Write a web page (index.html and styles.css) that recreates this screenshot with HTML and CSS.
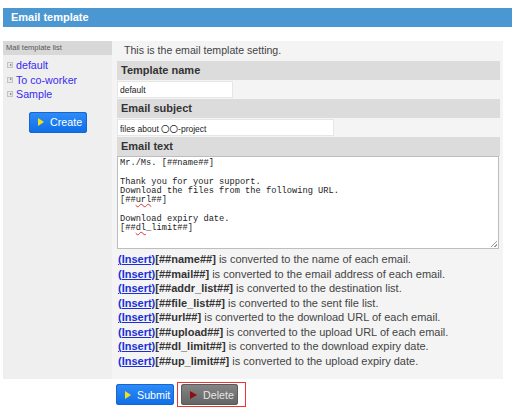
FILE: index.html
```html
<!DOCTYPE html>
<html>
<head>
<meta charset="utf-8">
<link rel="stylesheet" href="styles.css">
</head>
<body>
<div class="header">Email template</div>
<div class="layout">
  <div class="sidebar">
    <div class="side-head">Mail template list</div>
    <ul class="tpl-list">
      <li><span class="sq"></span><a href="#">default</a></li>
      <li><span class="sq"></span><a href="#">To co-worker</a></li>
      <li><span class="sq"></span><a href="#">Sample</a></li>
    </ul>
    <div class="create-wrap"><button class="btn btn-blue create"><span class="tri tri-yellow"></span>Create</button></div>
  </div>
  <div class="main">
    <p class="intro">This is the email template setting.</p>
    <div class="bar">Template name</div>
    <div class="field"><input class="inp inp-name" value="default"></div>
    <div class="bar">Email subject</div>
    <div class="field"><input class="inp inp-subj" value="files about 〇〇-project"></div>
    <div class="bar">Email text</div>
    <div class="textarea">Mr./Ms. [##name##]

Thank you for your support.
Download the files from the following URL.
[##<span class="sp">url</span>##]

Download expiry date.
[##<span class="sp">dl</span>_limit##]<span class="grip"></span></div>
    <ul class="help">
      <li><a href="#">(Insert)</a><b>[##name##]</b> is converted to the name of each email.</li>
      <li><a href="#">(Insert)</a><b>[##mail##]</b> is converted to the email address of each email.</li>
      <li><a href="#">(Insert)</a><b>[##addr_list##]</b> is converted to the destination list.</li>
      <li><a href="#">(Insert)</a><b>[##file_list##]</b> is converted to the sent file list.</li>
      <li><a href="#">(Insert)</a><b>[##url##]</b> is converted to the download URL of each email.</li>
      <li><a href="#">(Insert)</a><b>[##upload##]</b> is converted to the upload URL of each email.</li>
      <li><a href="#">(Insert)</a><b>[##dl_limit##]</b> is converted to the download expiry date.</li>
      <li><a href="#">(Insert)</a><b>[##up_limit##]</b> is converted to the upload expiry date.</li>
    </ul>
  </div>
</div>
<div class="actions">
  <button class="btn btn-blue submit"><span class="tri tri-yellow"></span>Submit</button>
  <div class="focus-ring"><button class="btn btn-gray delete"><span class="tri tri-red"></span>Delete</button></div>
</div>
</body>
</html>
```
FILE: styles.css
```css
html, body { margin: 0; padding: 0; background: #fff; }
body { font-family: "Liberation Sans", Arial, sans-serif; color: #333; }

.header {
  margin: 8px 0 0 3px;
  height: 19px;
  line-height: 19px;
  background: #4b97d1;
  color: #fff;
  font-weight: bold;
  font-size: 11px;
  padding-left: 8px;
}

.layout {
  display: flex;
  margin: 14px 0 0 3px;
  height: 338px;
}

.sidebar { width: 109px; background: #efefef; }
.side-head {
  height: 14px; line-height: 14px;
  background: #d8d8d8; color: #555;
  font-size: 7.5px; padding-left: 3px;
}
.tpl-list { list-style: none; margin: 3px 0 0 0; padding: 0 0 0 4px; }
.tpl-list li {
  display: flex; align-items: center; gap: 3px;
  height: 14.5px; font-size: 10.7px;
}
.tpl-list a { color: #3a2cf0; text-decoration: none; }
.sq {
  width: 6px; height: 6px; box-sizing: border-box;
  border: 1px solid #c4c4c4; background: #e8e8e8; position: relative;
}
.sq::after {
  content: ""; position: absolute; left: 1.5px; top: 0.5px;
  border-left: 2.5px solid #777; border-top: 1.5px solid transparent; border-bottom: 1.5px solid transparent;
}
.create-wrap { padding: 10px 0 0 26px; }

.btn {
  display: flex; align-items: center; gap: 6px;
  height: 21px; border-radius: 3px; border: 0;
  font-family: "Liberation Sans", Arial, sans-serif;
  font-size: 10.7px; padding: 0 0 0 9px; cursor: pointer;
}
.btn-blue {
  background: linear-gradient(#2e8df7, #0f6de8);
  color: #fff;
  box-shadow: 0 0 0 1px #1766d0 inset;
}
.btn-gray {
  background: linear-gradient(#868686, #636363);
  color: #e6e6e6;
  box-shadow: 0 0 0 1px #5a5a5a inset;
}
.create { width: 58px; }
.tri { width: 0; height: 0; border-top: 4px solid transparent; border-bottom: 4px solid transparent; }
.tri-yellow { border-left: 6px solid #f2e01c; }
.tri-red { border-left: 7px solid #8a1010; }

.main {
  flex: 1; max-width: 383px;
  background: #f4f4f4;
  padding: 0 3px 0 5px;
}
.intro { margin: 0; height: 20px; line-height: 18px; font-size: 10.6px; color: #444; padding-left: 7px; }
.bar {
  height: 19px; line-height: 19px;
  background: #dcdcdc; font-weight: bold; font-size: 11px;
  color: #333; padding-left: 4px;
}
.field { height: 19px; display: flex; align-items: center; }
.inp {
  height: 15px; box-sizing: border-box; border: 0; background: #fff;
  font-family: "Liberation Sans", "Noto Sans CJK JP", sans-serif;
  font-size: 8.5px; color: #222; padding: 0 2px; margin-left: 1px;
  box-shadow: 0 0 0 1px #e6e6e6;
}
.inp-name { width: 114px; }
.inp-subj { width: 215px; }

.textarea {
  position: relative;
  height: 93px; box-sizing: border-box;
  background: #fff; border: 1px solid #bdbdbd;
  font-family: "Liberation Mono", "Courier New", monospace;
  font-size: 8.7px; line-height: 9.3px; color: #222;
  padding: 2px 2px; white-space: pre; overflow: hidden;
  margin-right: 1px;
}
.sp { text-decoration: underline wavy #e03030; text-decoration-thickness: 1px; text-underline-offset: 1px; }
.grip {
  position: absolute; right: 1px; bottom: 1px; width: 8px; height: 8px;
  background: repeating-linear-gradient(135deg, transparent 0 1.5px, #9a9a9a 1.5px 2.5px);
  clip-path: polygon(100% 0, 100% 100%, 0 100%);
}

.help { list-style: none; margin: 3px 0 0 0; padding: 0 0 0 1px; }
.help li { height: 14.5px; line-height: 14.5px; font-size: 11px; color: #444; white-space: nowrap; }
.help a { color: #1a2fd8; font-weight: bold; text-decoration: underline; }
.help b { color: #333; }

.actions { display: flex; align-items: center; margin: 3px 0 0 116px; gap: 3px; }
.submit { width: 58px; }
.focus-ring { border: 1px solid #e33; padding: 1px 7px 1px 3px; }
.delete { width: 57px; }
```
